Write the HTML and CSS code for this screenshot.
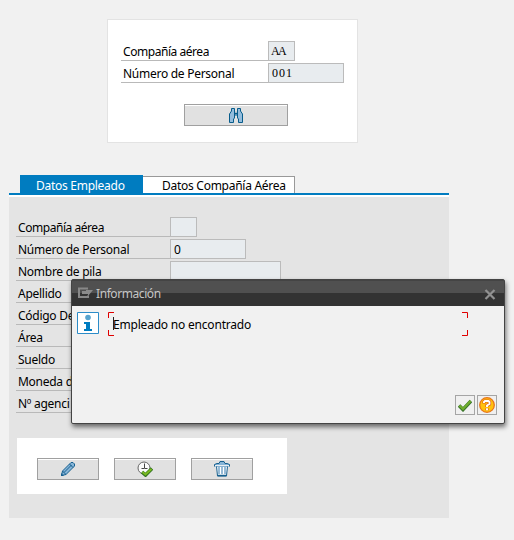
FILE: index.html
```
<!DOCTYPE html>
<html lang="es">
<head>
<meta charset="utf-8">
<title>Datos Empleado</title>
<link rel="stylesheet" href="styles.css">
</head>
<body>
<main class="screen">
  <section class="search">
    <div class="row"><span class="label tight">Compañía aérea</span><span class="field short code letters">AA</span></div>
    <div class="row"><span class="label">Número de Personal</span><span class="field medium code">001</span></div>
    <button class="btn find" aria-label="Buscar"><svg width="14" height="15" viewBox="0 0 14 15"><path d="M2.500 3V.5h3V3l.5 2.500h2L8.500 3V.5h3V3l2 3v8.500h-4V11l-1-1v-3h-3v3l-1 1v3.500h-4V6z" fill="#94bddd" stroke="#075c8b"/><path d="M5.500 3v4M8.500 3v4" stroke="#075c8b"/></svg></button>
  </section>
  <section class="tabs">
    <nav class="tabbar"><span class="tab active">Datos Empleado</span><span class="tab other">Datos Compañía Aérea</span></nav>
    <div class="panel">
      <div class="row"><span class="label tight">Compañía aérea</span><span class="field short"></span></div>
      <div class="row"><span class="label">Número de Personal</span><span class="field medium">0</span></div>
      <div class="row"><span class="label">Nombre de pila</span><span class="field wide"></span></div>
      <div class="row"><span class="label">Apellido</span></div>
      <div class="row"><span class="label">Código De</span></div>
      <div class="row"><span class="label">Área</span></div>
      <div class="row"><span class="label">Sueldo</span></div>
      <div class="row"><span class="label">Moneda d</span></div>
      <div class="row"><span class="label">Nº agenci</span></div>
      <div class="actions">
        <button class="btn" aria-label="Modificar"><svg width="16" height="16" viewBox="0 0 16 16"><path d="M1.500 14.500l1-4.500L11 1.500h2l1.500 1.500v2L6 13.500z" fill="#86b4d7" stroke="#17608f"/><path d="M4 11.500l7.500-7.500M9.500 3l3.500 3.500M2.500 10l3.500 3.500" stroke="#17608f"/><path d="M1 15v-3l3 3z" fill="#17608f"/></svg></button>
        <button class="btn" aria-label="Ejecutar"><svg width="16" height="16" viewBox="0 0 16 16"><circle cx="7" cy="7" r="6" fill="#fafafa" stroke="#666"/><path d="M7.500 2.500v5h3M7 7.500H4.500" fill="none" stroke="#444"/><path d="M5 11l3.500 3L15 7.500" fill="none" stroke="#327320" stroke-width="3.600"/><path d="M5.500 11l3 2.500L14.500 8" fill="none" stroke="#7ab91f" stroke-width="2"/></svg></button>
        <button class="btn" aria-label="Borrar"><svg width="16" height="16" viewBox="0 0 16 16"><path d="M2.500 5h11l-1 10h-9z" fill="#fff" stroke="#17608f"/><path d="M3.500 14.500h9" stroke="#17608f" stroke-width="1.500"/><path d="M.5 5.500v-2L3 2.500h2l1-2h4l1 2h2l2.500 1v2" fill="#86b4d7" stroke="#17608f"/><path d="M1 4.500h14" stroke="#e8eef2"/><path d="M5 6v7M8 6v7M11 6v7" stroke="#6c9fc6" stroke-width="1.400"/></svg></button>
      </div>
    </div>
  </section>
  <section class="dialog" role="dialog">
    <header class="title">
      <svg class="exit" width="16" height="12" viewBox="0 0 16 12"><path d="M10 1.500H1V10h9V8.500" fill="none" stroke="#888" stroke-width="2"/><path d="M4 4h4V3h7l-5 6V7H4z" fill="#8b8b8b"/></svg>
      <span class="heading">Información</span>
      <svg class="close" width="12" height="11" viewBox="0 0 12 11"><path d="M1.500 1l9 9M10.500 1l-9 9" stroke="#919191" stroke-width="2.200"/></svg>
    </header>
    <div class="message">
      <svg class="info" width="22" height="22" viewBox="0 0 22 22"><path d="M.5 .5h21v21H.5z" fill="#fff" stroke="#2c8cc8"/><circle cx="11" cy="5.500" r="2.800" fill="#56a3cf"/><path d="M7 10h6v7h2v2H7v-2h2v-5H7z" fill="#007cc0"/></svg>
      <div class="textbox">
        <svg class="corners" width="360" height="24" viewBox="0 0 360 24"><path d="M6 .5H.5V6M354 .5h5.500V6M.5 18v5.500H6M354 23.500h5.500V18" fill="none" stroke="#e00000"/><path d="M5.500 5v13" stroke="#222"/></svg>
        <span class="msg">Empleado no encontrado</span>
      </div>
    </div>
    <footer class="foot">
      <button class="small" aria-label="Continuar"><svg width="14" height="13" viewBox="0 0 14 13"><path d="M1 6.500L5 10.500 13 2" fill="none" stroke="#39752a" stroke-width="3.600"/><path d="M1.500 6.500L5 10l7.500-8" fill="none" stroke="#70ad2d" stroke-width="2.200"/></svg></button>
      <button class="small" aria-label="Ayuda"><svg width="16" height="16" viewBox="0 0 16 16"><circle cx="8" cy="8" r="7.300" fill="#ffc20e" stroke="#e8751a" stroke-width="1.300"/><path d="M5 6.500V5l1-1h3.500l1 1v2L8 8.500V10M8 11.300v2" fill="none" stroke="#df5d18" stroke-width="3.200"/><path d="M5 6V5l1-1h3.500l1 1v2L8 8.500V10M8 11.300v2" fill="none" stroke="#fff" stroke-width="1.900"/></svg></button>
    </footer>
  </section>
</main>
</body>
</html>
```
FILE: styles.css
```
* { box-sizing: border-box; }
body { margin: 0; background: #f1f1f1; color: #000; font: 12px "Noto Sans", sans-serif; letter-spacing: -.27px; }
.screen { position: relative; width: 514px; height: 540px; overflow: hidden; padding-top: 19px; }
.search { width: 251px; height: 124px; margin-left: 107px; padding: 21px 13px 0; background: #fff; border: 1px solid #e3e3e3; }
.row { display: flex; height: 20px; margin-bottom: 2px; }
.label { display: block; height: 20px; border-bottom: 1px solid #b9b9b9; padding-left: 2px; line-height: 22px; white-space: nowrap; }
.tight { letter-spacing: -.45px; }
.search .label { width: 147px; }
.panel .label { width: 154px; }
.field { height: 20px; border: 1px solid #bbb; background: #e8ecef; padding-left: 3px; line-height: 19px; }
.short { width: 27px; }
.medium { width: 76px; }
.wide { width: 111px; }
.code { font: 12px/19px "Liberation Serif", serif; letter-spacing: 1px; }
.letters { padding-left: 2px; letter-spacing: -1.6px; }
button { display: flex; align-items: center; justify-content: center; padding: 0; margin: 0; }
.btn { width: 62px; height: 22px; border: 1px solid #a0a0a0; background: #e1e1e1; box-shadow: inset 0 1px #fff; }
.btn svg { margin-top: -1px; }
.find { width: 104px; margin: 21px 0 0 63px; }
.find svg { margin-top: 0; }
.tabs { width: 440px; margin: 32px 0 0 9px; }
.tabbar { display: flex; align-items: flex-end; height: 20px; padding-left: 11px; border-bottom: 2px solid #007cc0; }
.tab { white-space: nowrap; line-height: 18px; }
.active { width: 123px; height: 18px; padding-left: 16px; background: #007cc0; color: #fff; line-height: 21px; }
.other { width: 152px; height: 17px; padding-left: 19px; background: #fff; border: solid #999; border-width: 1px 1px 0 0; }
.panel { height: 323px; padding: 20px 0 0 7px; border-top: 2px solid #fff; background: #e4e4e4; }
.actions { display: flex; gap: 15px; width: 270px; height: 56px; margin: 25px 0 0 1px; padding: 20px; background: #fff; }
.dialog { position: absolute; left: 71px; top: 279px; width: 434px; height: 145px; display: flex; flex-direction: column; background: #f1f1f1; border: solid #444; border-width: 1px 1px 1px 1px; border-radius: 2px; box-shadow: 1px 3px 5px rgba(0,0,0,.55); }
.title { display: flex; align-items: center; height: 26px; padding: 0 8px 0 6px; background: linear-gradient(#444 1px, #505050 1px, #505050 13px, #333 13px); color: #c5c5c5; }
.heading { margin-left: 2px; flex: 1; letter-spacing: -.42px; }
.close { margin-top: 2px; }
.message { display: flex; padding: 6px 0 0 5px; }
.textbox { position: relative; width: 360px; height: 24px; margin-left: 9px; padding-left: 5px; line-height: 25px; letter-spacing: -.2px; }
.corners { position: absolute; left: 0; top: 0; }
.foot { display: flex; justify-content: flex-end; gap: 2px; margin-top: auto; padding: 0 7px 8px 0; }
.small { width: 20px; height: 20px; border: 1px solid #a5a5a5; background: #f0f0f0; }
```
